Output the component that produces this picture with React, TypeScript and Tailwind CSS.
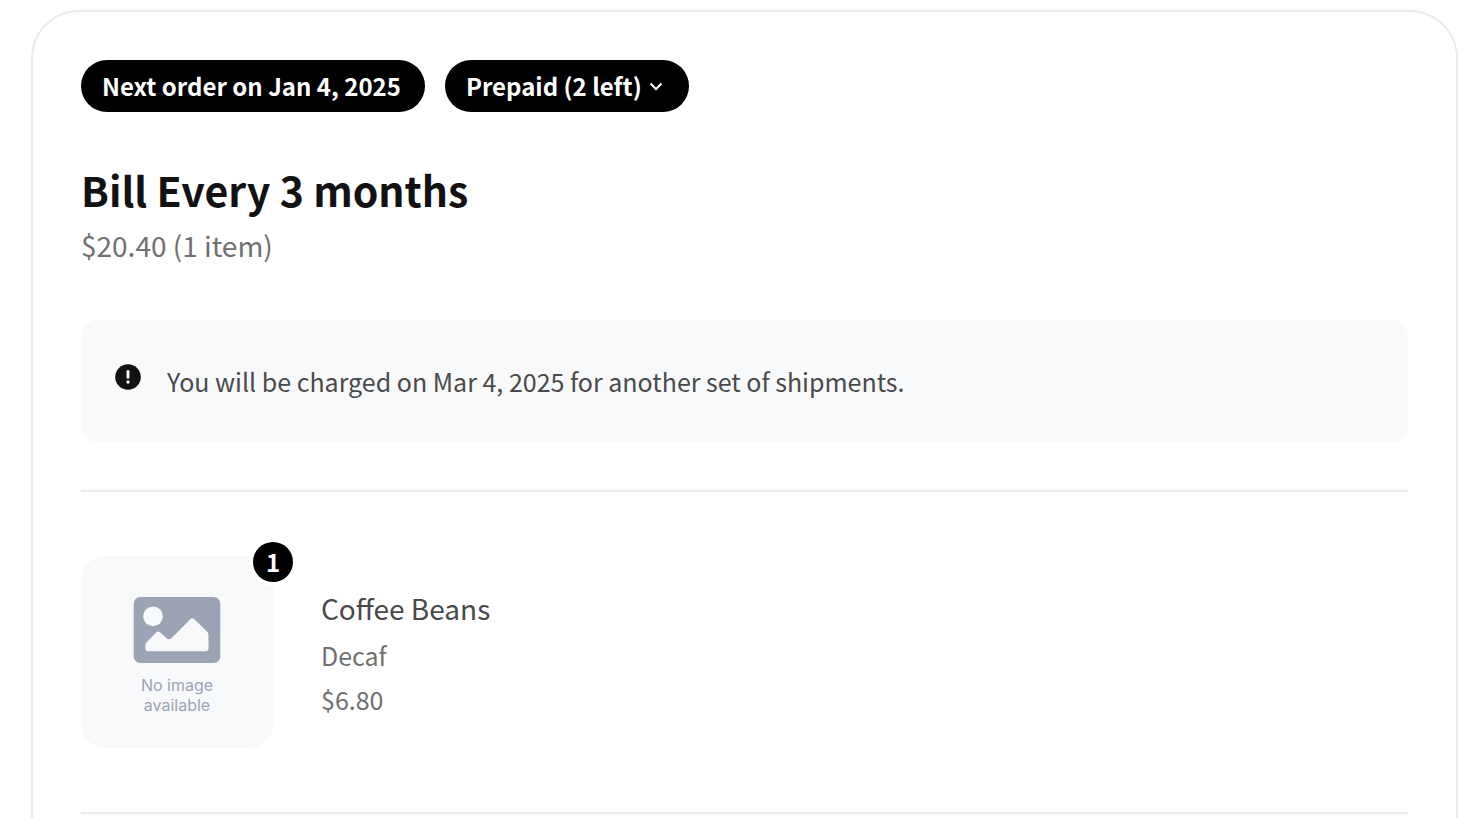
import type { ReactNode } from "react";

const pill =
  "flex h-[52px] items-center rounded-full bg-black pl-[21px] text-[24px] leading-8 font-bold text-white";

function ChevronIcon() {
  return (
    <svg aria-hidden="true" width="14" height="10" viewBox="0 0 14 10" fill="none" stroke="currentColor" strokeWidth="2">
      <path d="M1.500 2.500 7 8l5.500-5.500" />
    </svg>
  );
}

function AlertIcon() {
  return (
    <svg aria-hidden="true" className="shrink-0" width="26" height="26" viewBox="0 0 26 26">
      <circle cx="13" cy="13" r="12.800" fill="#121212" />
      <path d="M11.500 6.800q0-.5.500-.5h2q.5 0 .5.500l-.2 7.600h-2.600z" fill="#fff" />
      <circle cx="13" cy="18" r="1.700" fill="#fff" />
    </svg>
  );
}

function PictureIcon() {
  return (
    <svg aria-hidden="true" width="88" height="66" viewBox="0 0 88 66">
      <rect x="0.700" y="0" width="86.600" height="66" rx="6.500" fill="#9ca3b4" />
      <circle cx="20" cy="19.300" r="9.900" fill="#f8f9fb" />
      <path
        d="M12.300 48.500q0-1.800 1.200-3L23.300 35.300q1.900-1.800 3.800 0l6.700 6.200q2.200 1.500 4.400 0L57.300 22.300q2-2 4 0L74.200 34.700q1.300 1.300 1.300 3v13.500q0 3-3 3H15.300q-3 0-3-3z"
        fill="#f8f9fb"
      />
    </svg>
  );
}

function Notice({ children }: { children: ReactNode }) {
  return (
    <div className="mt-[54px] flex h-[122px] items-center gap-[26px] rounded-2xl bg-[#f8f9fb] px-[34px]">
      <span className="pb-2">
        <AlertIcon />
      </span>
      <p className="text-[25px] leading-9 text-[#4a4a4a]">{children}</p>
    </div>
  );
}

export default function App() {
  return (
    <main className="bg-white pt-[10px] pr-5 pl-[31px] font-['Noto_Sans_CJK_SC','Noto_Sans',sans-serif]">
      <article className="rounded-t-[48px] border-2 border-b-0 border-[#ebebeb] px-12 pt-12 pb-1">
        <div className="flex gap-5">
          <span className={`${pill} pr-6`}>Next order on Jan 4, 2025</span>
          <button type="button" className={`${pill} gap-[7px] pr-[26px]`}>
            Prepaid (2 left)
            <ChevronIcon />
          </button>
        </div>

        <h1 className="mt-12 text-[41px] leading-[58px] font-bold text-[#121212]">Bill Every 3 months</h1>
        <p className="mt-[6px] text-[28px] leading-[42px] text-[#707070]">$20.40 (1 item)</p>

        <Notice>You will be charged on Mar 4, 2025 for another set of shipments.</Notice>

        <hr className="mt-12 border-t-2 border-[#ebebeb]" />

        <section className="flex items-center gap-12 py-16">
          <div className="relative flex size-48 flex-col items-center rounded-3xl bg-[#f8f9fb] pt-[41px]">
            <PictureIcon />
            <p className="mt-3 w-24 text-center font-['Inter',sans-serif] text-base leading-5 text-[#9ca3b4]">
              No image available
            </p>
            <span className="absolute -top-[14px] -right-5 flex size-10 items-center justify-center rounded-full bg-black text-[24px] leading-8 font-bold text-white ring-4 ring-white">
              1
            </span>
          </div>
          <div className="pt-0.5">
            <h2 className="mb-0.5 text-[28px] leading-[46px] text-[#4a4a4a]">Coffee Beans</h2>
            <p className="text-[25px] leading-[44px] text-[#707070]">Decaf</p>
            <p className="text-[25px] leading-[44px] text-[#707070]">$6.80</p>
          </div>
        </section>

        <hr className="border-t-2 border-[#ebebeb]" />
      </article>
    </main>
  );
}
